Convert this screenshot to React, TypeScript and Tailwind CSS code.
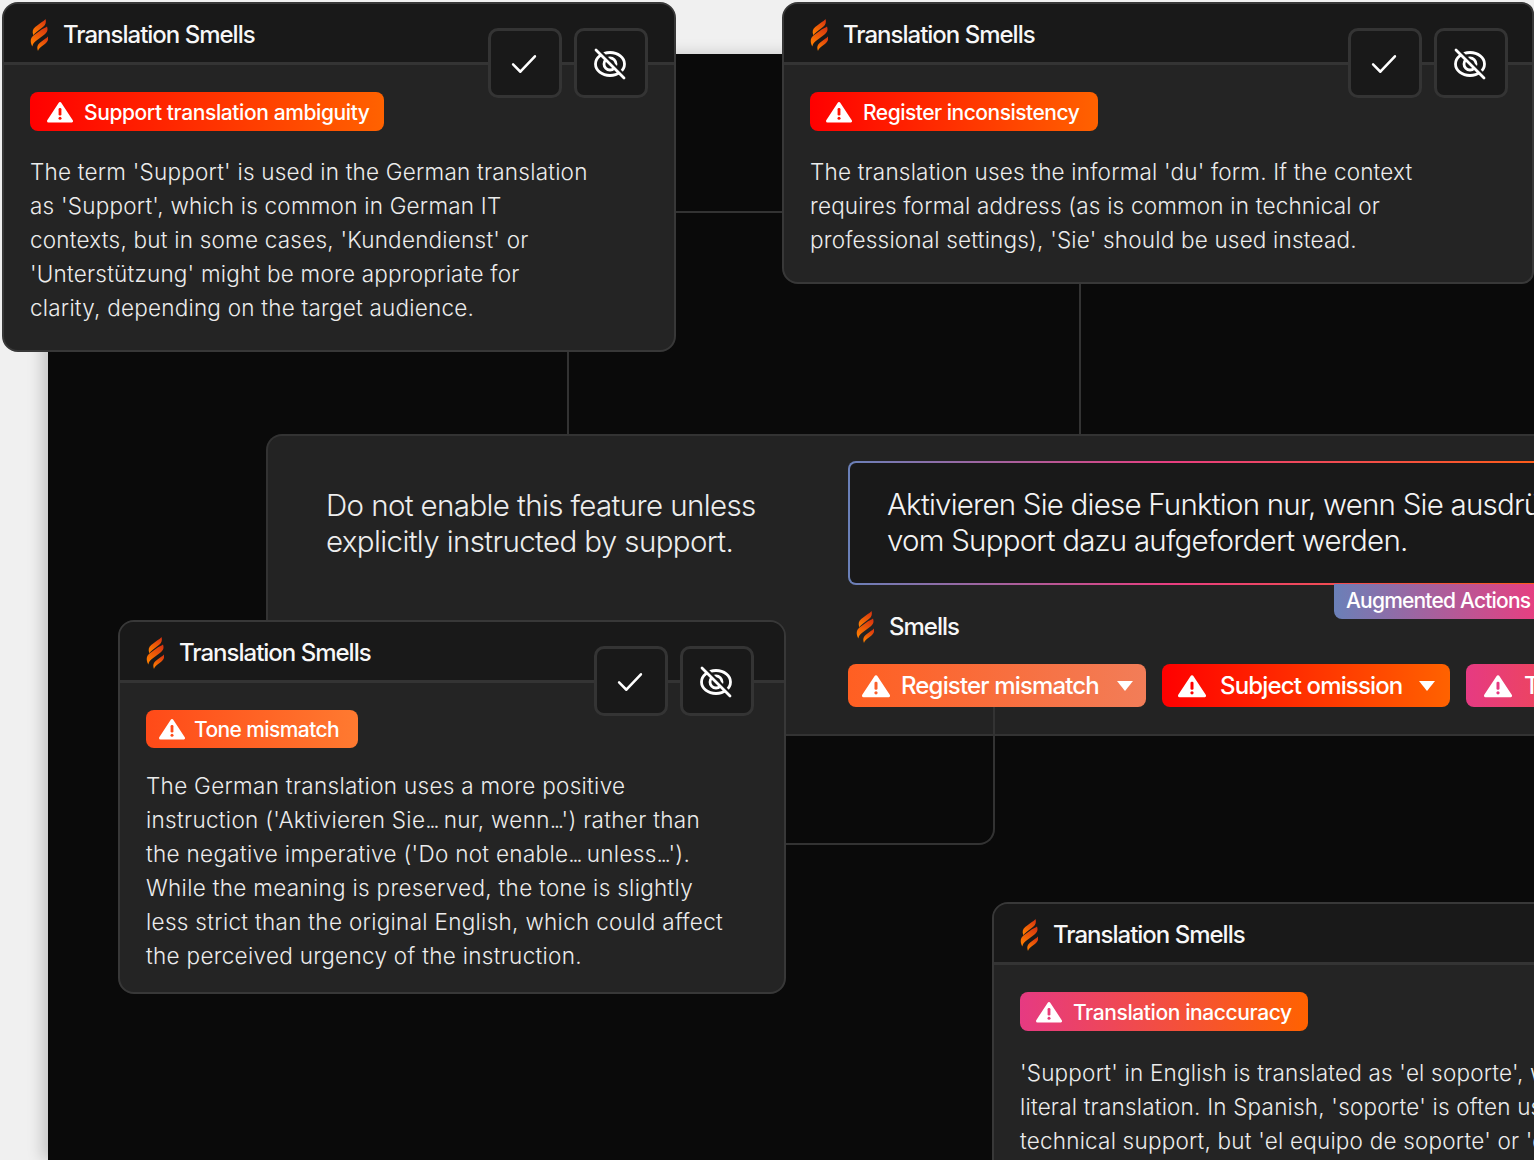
import React from "react";

const FlameLogo = ({ id, className }: { id: string; className: string }) => (
  <svg viewBox="0 0 18 32" className={className}>
    <defs>
      <linearGradient id={id} x1="0.7" y1="0" x2="0.3" y2="1">
        <stop offset="0" stopColor="#d9360f" />
        <stop offset="1" stopColor="#ff8000" />
      </linearGradient>
    </defs>
    <g fill={`url(#${id})`}>
      <path d="M15.500 0c1 3.200.2 5.800-2.300 7.800L6.500 13c-1.700 1.300-2.500 2.200-3 3.500C2 13 2.500 10 5.200 7.900L10.800 3.800C12.800 2.400 14.500 1.500 15.500 0z" />
      <path d="M17 7.500c1.200 3.400.3 6-2.500 8L6.200 21.800c-2.200 1.700-3.400 3.200-3.900 5.700C-.3 22.500.4 18.800 3.800 16.200l8.200-5.900c2.200-1.300 4-1.900 5-2.800z" />
      <path d="M17.800 17.500c.9 3.100-.1 5.300-2.600 7.200l-4 3c-1.700 1.300-2.700 2.600-3.200 4.300-1.500-3.700-.6-6.500 2.500-8.800l4-2.900c1.600-1 2.600-1.600 3.300-2.800z" />
    </g>
  </svg>
);

const WarningIcon = ({ bang, className }: { bang: string; className: string }) => (
  <svg viewBox="0 0 26 22" className={className}>
    <path
      fill="#fff"
      stroke="#fff"
      strokeWidth="3"
      strokeLinejoin="round"
      d="M13 2.500 24.500 20H1.500z"
    />
    <rect x="11.600" y="7" width="2.800" height="7.500" rx="1.200" fill={bang} />
    <circle cx="13" cy="17.300" r="1.500" fill={bang} />
  </svg>
);

const EyeOffIcon = () => (
  <svg viewBox="0 0 32 32" className="w-8 h-8" fill="none" stroke="#fff" strokeWidth="2.800">
    <ellipse cx="16" cy="16" rx="14.500" ry="11.500" />
    <circle cx="16" cy="16" r="6" />
    <path d="M4 1 32 29" stroke="#191919" strokeWidth="3" />
    <path d="M2 2 30 30" strokeLinecap="round" />
  </svg>
);

const CheckIcon = () => (
  <svg viewBox="0 0 28 22" className="w-[26px] h-5" fill="none" stroke="#fff" strokeWidth="2.800">
    <path d="M2 11.500 10 19.500 26 2.500" strokeLinecap="round" strokeLinejoin="round" />
  </svg>
);

const ActionButton = ({ children }: { children: React.ReactNode }) => (
  <button className="w-[74px] h-[70px] pt-[2px] pr-[2px] flex items-center justify-center rounded-[10px] border-[3px] border-[#343434] bg-[#191919]">
    {children}
  </button>
);

// the periods of an ellipsis sit closer together in the picture
const BodyLine = ({ text }: { text: string }) => {
  const parts = text.split("...");
  return (
    <span className="block">
      {parts.map((part, i) => (
        <React.Fragment key={i}>
          {part}
          {i < parts.length - 1 && <span className="tracking-[-2.400px]">...</span>}
        </React.Fragment>
      ))}
    </span>
  );
};

type SmellCardProps = {
  id: string;
  label: string;
  labelClass: string;
  bang: string;
  lines: string[];
  bodyClass: string;
  actionsClass?: string;
  className: string;
};

const SmellCard = ({ id, label, labelClass, bang, lines, bodyClass, actionsClass, className }: SmellCardProps) => (
  <div className={`absolute rounded-2xl border-2 border-[#383838] bg-[#242424] overflow-hidden font-['Inter',sans-serif] ${className}`}>
    <div className="flex items-center gap-[15px] h-[61px] pl-[26px] pt-[3px] bg-[#191919] border-b-[3px] border-[#343434]">
      <FlameLogo id={id} className="w-[18px] h-8" />
      <span className="text-[24px] font-[550] tracking-[-1px] text-[#f7f7f7] whitespace-nowrap">
        Translation Smells
      </span>
    </div>
    {actionsClass && (
      <div className={`absolute top-[24px] flex gap-3 ${actionsClass}`}>
        <ActionButton>
          <CheckIcon />
        </ActionButton>
        <ActionButton>
          <EyeOffIcon />
        </ActionButton>
      </div>
    )}
    <div className="px-[26px] pt-[27px]">
      <div className={`inline-flex items-center rounded-lg ${labelClass}`}>
        <WarningIcon bang={bang} className="w-[26px] h-[22px]" />
        <span className="pt-[2px] text-[21px] font-[550] text-white whitespace-nowrap">{label}</span>
      </div>
      <p className={`text-[22.500px] leading-[34px] font-light text-[#ececec] whitespace-nowrap ${bodyClass}`}>
        {lines.map((line) => (
          <BodyLine key={line} text={line} />
        ))}
      </p>
    </div>
  </div>
);

const SmellChip = ({ label, bang, className }: { label: string; bang: string; className: string }) => (
  <div className={`flex items-center h-[43px] rounded-lg text-white shrink-0 ${className}`}>
    <WarningIcon bang={bang} className="w-7 h-6 shrink-0" />
    <span className="flex-1 text-[24px] font-[550] tracking-[-0.85px] whitespace-nowrap overflow-hidden">{label}</span>
    <svg viewBox="0 0 18 12" className="w-[18px] h-3 shrink-0">
      <path d="M1 1h16L9 11z" fill="#fff" />
    </svg>
  </div>
);

// panel with the source and target segments
const SegmentPanel = () => (
  <div className="absolute left-[218px] top-[380px] w-[1300px] h-[302px] flex rounded-l-2xl border-2 border-r-0 border-[#333] bg-[#232323] font-['Inter',sans-serif]">
    <div className="w-[580px] shrink-0 pl-[58px] pt-[51px] text-[29.500px] leading-[36px] font-light tracking-[-0.62px] text-[#ededed] whitespace-nowrap">
      Do not enable this feature unless
      <br />
      explicitly instructed by support.
    </div>
    <div className="relative flex-1 min-w-0 pt-[25px]">
      <div className="h-[124px] rounded-l-lg p-[2px] bg-[linear-gradient(90deg,#6a80b8_0%,#e83e80_45%,#ff5f10_100%)]">
        <div className="h-full rounded-l-md bg-[#191919] pl-[37px] pt-[23px] text-[29.500px] leading-[36px] font-light tracking-[-0.78px] text-[#f4f4f4] whitespace-nowrap overflow-hidden">
          Aktivieren Sie diese Funktion nur, wenn Sie ausdrücklich
          <br />
          vom Support dazu aufgefordert werden.
        </div>
      </div>
      <div className="absolute left-[486px] top-[148px] w-[240px] h-[35px] rounded-bl-lg pl-3 pt-[1px] bg-[linear-gradient(90deg,#6a80b8_0%,#e83e80_85%)] text-[21px] font-medium tracking-[-0.8px] text-white whitespace-nowrap">
        Augmented Actions
      </div>
      <div className="flex items-center gap-[15px] h-8 ml-2 mt-[26px]">
        <FlameLogo id="flame-panel" className="w-[18px] h-8" />
        <span className="text-[24px] font-[550] tracking-[-1px] text-[#f7f7f7]">Smells</span>
      </div>
      <div className="flex gap-4 mt-[21px]">
        <SmellChip
          label="Register mismatch"
          bang="#fb5f2a"
          className="w-[298px] pl-[14px] pr-[12px] gap-[11px] bg-[linear-gradient(90deg,#ff5f22,#f27d58)]"
        />
        <SmellChip
          label="Subject omission"
          bang="#ff0000"
          className="w-[288px] pl-[16px] pr-[14px] gap-[14px] bg-[linear-gradient(90deg,#ff0000,#ff6200)]"
        />
        <SmellChip
          label="Translation"
          bang="#e63a82"
          className="w-[288px] pl-[18px] pr-[14px] gap-[12px] bg-[linear-gradient(90deg,#e63a82,#ff6200)]"
        />
      </div>
    </div>
  </div>
);

const App = () => {
  return (
    <div className="relative w-[1534px] h-[1160px] overflow-hidden bg-[#f0f0f0] pt-[54px] pl-[48px]">
      <div className="relative h-full bg-[#0a0a0a] shadow-[-6px_0_14px_rgba(0,0,0,0.18)]">
        {/* connector lines, canvas offset is 48/54 */}
        <div className="absolute left-[628px] top-[157px] w-[106px] h-[2px] bg-[#333]" />
        <div className="absolute left-[519px] top-[298px] w-[2px] h-[82px] bg-[#333]" />
        <div className="absolute left-[1031px] top-[230px] w-[2px] h-[150px] bg-[#333]" />

        <SegmentPanel />

        <div className="absolute left-[738px] top-[653px] w-[209px] h-[138px] rounded-br-2xl border-r-2 border-b-2 border-[#333]" />
      </div>

      <SmellCard
        id="flame-1"
        className="left-[2px] top-[2px] w-[674px] h-[350px]"
        actionsClass="right-[26px]"
        label="Support translation ambiguity"
        labelClass="h-[39px] pl-[17px] pr-[14px] gap-[11px] tracking-[-0.4px] bg-[linear-gradient(90deg,#ff0000,#ff6200)]"
        bang="#ff1000"
        bodyClass="mt-[24px] tracking-[0.22px]"
        lines={[
          "The term 'Support' is used in the German translation",
          "as 'Support', which is common in German IT",
          "contexts, but in some cases, 'Kundendienst' or",
          "'Unterstützung' might be more appropriate for",
          "clarity, depending on the target audience.",
        ]}
      />
      <SmellCard
        id="flame-2"
        className="left-[782px] top-[2px] w-[752px] h-[282px] rounded-r-xl"
        actionsClass="right-[24px]"
        label="Register inconsistency"
        labelClass="h-[39px] pl-[16px] pr-[19px] gap-[11px] tracking-[-0.5px] bg-[linear-gradient(90deg,#ff0000,#ff6200)]"
        bang="#ff1000"
        bodyClass="mt-[24px] tracking-[0.19px]"
        lines={[
          "The translation uses the informal 'du' form. If the context",
          "requires formal address (as is common in technical or",
          "professional settings), 'Sie' should be used instead.",
        ]}
      />
      <SmellCard
        id="flame-3"
        className="left-[118px] top-[620px] w-[668px] h-[374px]"
        actionsClass="right-[30px]"
        label="Tone mismatch"
        labelClass="h-[38px] pl-[13px] pr-[19px] gap-[9px] tracking-[-0.6px] bg-[linear-gradient(90deg,#ff4a18,#ff7a30)]"
        bang="#ff4a18"
        bodyClass="mt-[21px] tracking-[0.3px]"
        lines={[
          "The German translation uses a more positive",
          "instruction ('Aktivieren Sie... nur, wenn...') rather than",
          "the negative imperative ('Do not enable... unless...').",
          "While the meaning is preserved, the tone is slightly",
          "less strict than the original English, which could affect",
          "the perceived urgency of the instruction.",
        ]}
      />
      <SmellCard
        id="flame-4"
        className="left-[992px] top-[902px] w-[640px] h-[340px]"
        label="Translation inaccuracy"
        labelClass="h-[39px] pl-[16px] pr-[16px] gap-[11px] tracking-[-0.4px] bg-[linear-gradient(90deg,#e63a82,#ff6200)]"
        bang="#e83a78"
        bodyClass="mt-[25px] tracking-[0.2px]"
        lines={[
          "'Support' in English is translated as 'el soporte', which is a",
          "literal translation. In Spanish, 'soporte' is often used for",
          "technical support, but 'el equipo de soporte' or 'el servicio",
        ]}
      />
    </div>
  );
};

export default App;
